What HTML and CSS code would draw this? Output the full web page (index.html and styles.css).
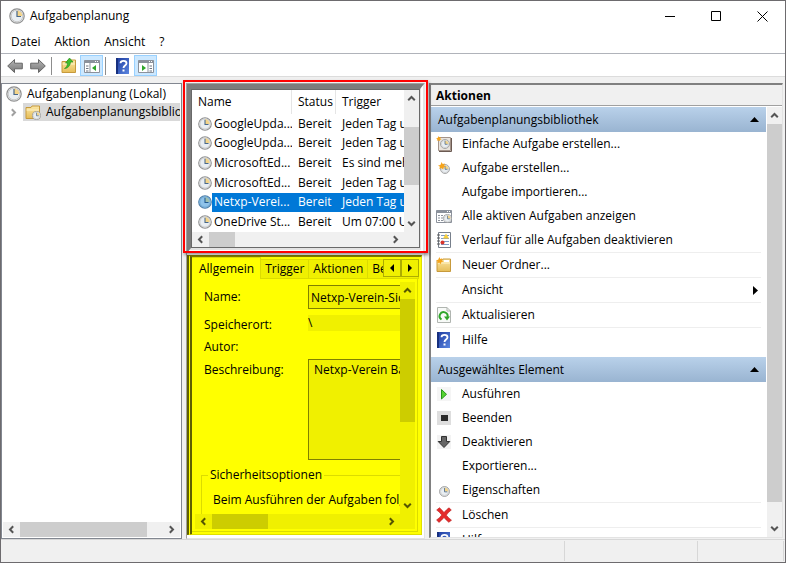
FILE: index.html
```html
<!DOCTYPE html>
<html lang="de">
<head>
<meta charset="UTF-8">
<meta name="viewport" content="width=device-width, initial-scale=1.0">
<title>Aufgabenplanung</title>
<link rel="stylesheet" href="styles.css">
</head>
<body>

<!-- Shared icons -->
<svg class="sprite" aria-hidden="true">
    <defs>
        <linearGradient id="g_help" x1="0" y1="0" x2="1" y2="1"><stop offset="0" stop-color="#1c3a9e"/><stop offset="1" stop-color="#5b86e0"/></linearGradient>
        <linearGradient id="g_folder" x1="0" y1="0" x2="0" y2="1"><stop offset="0" stop-color="#fbe7a6"/><stop offset="1" stop-color="#e6bd57"/></linearGradient>
        <linearGradient id="g_arrow" x1="0" y1="0" x2="0" y2="1"><stop offset="0" stop-color="#b5b5b5"/><stop offset="1" stop-color="#777777"/></linearGradient>
    </defs>
    <symbol id="clock" viewBox="0 0 16 16">
        <circle cx="8" cy="8" r="7.2" fill="#e9eef2" stroke="#8f8f8f" stroke-width="1.2"/>
        <circle cx="8" cy="8" r="5.8" fill="none" stroke="#c9c9c9" stroke-width="1"/>
        <path d="M8 8V2.6A5.4 5.4 0 0 1 13.4 8z" fill="#f3d489"/>
        <path d="M8 3v5.500h4" fill="none" stroke="#48688a" stroke-width="1.2"/>
    </symbol>
    <symbol id="clock_selected" viewBox="0 0 16 16">
        <circle cx="8" cy="8" r="7.2" fill="#8fc3ea" stroke="#4f7fa8" stroke-width="1.2"/>
        <circle cx="8" cy="8" r="5.8" fill="none" stroke="#70a9d4" stroke-width="1"/>
        <path d="M8 8V2.6A5.4 5.4 0 0 1 13.4 8z" fill="#9fbfae"/>
        <path d="M8 3v5.500h4" fill="none" stroke="#215a92" stroke-width="1.2"/>
    </symbol>
    <symbol id="help" viewBox="0 0 16 16">
        <path d="M1 0h13v16H1z" fill="url(#g_help)"/>
        <path d="M1 0h2v16H1z" fill="#17307f"/>
        <path d="M5.500 5.200C5.500 2 11.500 2 11.500 5.200C11.500 7.500 8.500 7.500 8.500 10" fill="none" stroke="#fff" stroke-width="1.8"/>
        <path d="M7.500 11.500h2v2h-2z" fill="#fff"/>
    </symbol>
    <symbol id="star" viewBox="0 0 16 16">
        <path d="M4.500 0l1.200 2.600L8.500 1.800 7.600 4.500 10 6 7.200 6.600 6.400 9.500 4.300 7.400 1.500 8.600 2.400 5.800 0 4.300 2.900 3.600z" fill="#f5a41c"/>
    </symbol>
    <symbol id="folder" viewBox="0 0 16 16">
        <path d="M1 3.500h5l1-1.500h7.500v12.500H1z" fill="url(#g_folder)" stroke="#c79a3c"/>
        <path d="M1.500 6h12.500" stroke="#fff3c8"/>
    </symbol>
    <symbol id="win" viewBox="0 0 16 16">
        <path d="M.5 2.500h15v12H.5z" fill="#fff" stroke="#8b919b"/>
        <path d="M.5 2.500h15v2.500H.5z" fill="#8b919b"/>
        <path d="M11 3.500h1M13 3.500h1" stroke="#fff"/>
    </symbol>
    <symbol id="up" viewBox="0 0 9 9"><path d="M1.200 6.200L4.500 3l3.300 3.200" fill="none" stroke="currentColor" stroke-width="2"/></symbol>
    <symbol id="down" viewBox="0 0 9 9"><path d="M1.200 2.800L4.500 6l3.300-3.200" fill="none" stroke="currentColor" stroke-width="2"/></symbol>
    <symbol id="left" viewBox="0 0 9 9"><path d="M6.200 1.200L3 4.500l3.200 3.300" fill="none" stroke="currentColor" stroke-width="2"/></symbol>
    <symbol id="right" viewBox="0 0 9 9"><path d="M2.800 1.200L6 4.500 2.800 7.800" fill="none" stroke="currentColor" stroke-width="2"/></symbol>
</svg>

<div class="window">
    <header class="titlebar">
        <svg class="icon"><use href="#clock"/></svg>
        <span class="title">Aufgabenplanung</span>
        <button class="win_button" aria-label="Minimieren"><svg class="win_icon" viewBox="0 0 11 11"><path d="M0 5.500h10"/></svg></button>
        <button class="win_button" aria-label="Maximieren"><svg class="win_icon" viewBox="0 0 11 11"><path d="M.5.5h9v9h-9z"/></svg></button>
        <button class="win_button" aria-label="Schließen"><svg class="win_icon" viewBox="0 0 11 11"><path d="M.5.5l10 10M10.500.5l-10 10"/></svg></button>
    </header>

    <nav class="menubar">
        <button>Datei</button>
        <button>Aktion</button>
        <button>Ansicht</button>
        <button>?</button>
    </nav>

    <div class="toolbar">
        <button class="tool" aria-label="Zurück"><svg class="icon" viewBox="0 0 16 16"><path d="M.7 8l6.800-6.500v3.700h7.800v5.600H7.500v3.700z" fill="url(#g_arrow)" stroke="#666"/></svg></button>
        <button class="tool" aria-label="Vorwärts"><svg class="icon" viewBox="0 0 16 16"><path d="M15.300 8L8.500 1.500v3.700H.7v5.600h7.800v3.700z" fill="url(#g_arrow)" stroke="#666"/></svg></button>
        <span class="tool_sep"></span>
        <button class="tool" aria-label="Nach oben"><svg class="icon" viewBox="0 0 16 16"><use href="#folder"/><path d="M3.500 10.500C5.500 9.500 6.500 7.500 6.500 5H4.500L8.500 0l3.500 4H9.500C9.300 7.500 7 10.500 3.500 10.500z" fill="#3fbf2c" stroke="#1f8a18" stroke-width=".6"/></svg></button>
        <button class="tool active" aria-label="Konsolenstruktur"><svg class="icon" viewBox="0 0 16 16"><use href="#win"/><path d="M6 5v9.500" stroke="#8b919b"/><path d="M2 8h2.500M2 10.500h2.500M2 13h2.500" stroke="#6d7582"/><path d="M12 7v6l-4-3z" fill="#2fa52a"/></svg></button>
        <span class="tool_sep"></span>
        <button class="tool" aria-label="Hilfe"><svg class="icon"><use href="#help"/></svg></button>
        <button class="tool active" aria-label="Aktionsbereich"><svg class="icon" viewBox="0 0 16 16"><use href="#win"/><path d="M10 5v9.500" stroke="#8b919b"/><path d="M11.500 8H14M11.500 10.500H14M11.500 13H14" stroke="#6d7582"/><path d="M4 7v6l4-3z" fill="#2fa52a"/></svg></button>
    </div>

    <main class="panes">
        <section class="tree">
            <ul class="tree_list">
                <li class="tree_row root"><svg class="icon"><use href="#clock"/></svg>Aufgabenplanung (Lokal)</li>
                <li class="tree_row">
                    <svg class="chevron"><use href="#right"/></svg>
                    <span class="tree_item"><svg class="icon" viewBox="0 0 16 16"><use href="#folder"/><use href="#clock" x="7" y="7" width="9" height="9"/></svg>Aufgabenplanungsbibliothek</span>
                </li>
            </ul>
            <div class="hscroll">
                <button aria-label="Nach links"><svg><use href="#left"/></svg></button>
                <span class="thumb thumb_tree"></span>
                <button aria-label="Nach rechts"><svg><use href="#right"/></svg></button>
            </div>
        </section>

        <div class="middle">
            <section class="tasks">
                <div class="tasks_view">
                    <table class="task_table">
                        <thead>
                            <tr><th class="col_name">Name</th><th class="col_status">Status</th><th>Trigger</th></tr>
                        </thead>
                        <tbody>
                            <tr><td><svg class="task_icon"><use href="#clock"/></svg>GoogleUpda...</td><td>Bereit</td><td>Jeden Tag u</td></tr>
                            <tr><td><svg class="task_icon"><use href="#clock"/></svg>GoogleUpda...</td><td>Bereit</td><td>Jeden Tag u</td></tr>
                            <tr><td><svg class="task_icon"><use href="#clock"/></svg>MicrosoftEd...</td><td>Bereit</td><td>Es sind meh</td></tr>
                            <tr><td><svg class="task_icon"><use href="#clock"/></svg>MicrosoftEd...</td><td>Bereit</td><td>Jeden Tag u</td></tr>
                            <tr class="selected"><td><svg class="task_icon"><use href="#clock_selected"/></svg>Netxp-Verei...</td><td>Bereit</td><td>Jeden Tag u</td></tr>
                            <tr><td><svg class="task_icon"><use href="#clock"/></svg>OneDrive St...</td><td>Bereit</td><td>Um 07:00 U</td></tr>
                        </tbody>
                    </table>
                    <div class="vscroll">
                        <button aria-label="Nach oben"><svg><use href="#up"/></svg></button>
                        <span class="thumb thumb_tasks"></span>
                        <button aria-label="Nach unten"><svg><use href="#down"/></svg></button>
                    </div>
                </div>
                <div class="hscroll corner">
                    <button aria-label="Nach links"><svg><use href="#left"/></svg></button>
                    <span class="thumb thumb_columns"></span>
                    <button aria-label="Nach rechts"><svg><use href="#right"/></svg></button>
                </div>
            </section>
            <div class="marker"></div>

            <section class="details">
                <div class="tabs">
                    <button class="tab current">Allgemein</button>
                    <button class="tab">Trigger</button>
                    <button class="tab">Aktionen</button>
                    <button class="tab last">Be</button>
                    <div class="tab_spin">
                        <button aria-label="Vorherige"><svg viewBox="0 0 4 8"><path d="M4 0v8L0 4z"/></svg></button>
                        <button aria-label="Nächste"><svg viewBox="0 0 4 8"><path d="M0 0v8l4-4z"/></svg></button>
                    </div>
                </div>
                <div class="tab_page">
                    <div class="form_view">
                        <div class="form">
                            <label for="task_name">Name:</label>
                            <input class="boxed" type="text" id="task_name" value="Netxp-Verein-Sic" readonly>
                            <label for="task_place">Speicherort:</label>
                            <input class="flat" type="text" id="task_place" value="\" readonly>
                            <span class="author">Autor:</span>
                            <label class="desc_label" for="task_desc">Beschreibung:</label>
                            <textarea class="boxed" id="task_desc" readonly>Netxp-Verein Ba</textarea>
                            <fieldset>
                                <legend>Sicherheitsoptionen</legend>
                                Beim Ausführen der Aufgaben folge
                            </fieldset>
                        </div>
                        <div class="vscroll">
                            <button aria-label="Nach oben"><svg><use href="#up"/></svg></button>
                            <span class="thumb thumb_form"></span>
                            <button aria-label="Nach unten"><svg><use href="#down"/></svg></button>
                        </div>
                    </div>
                    <div class="hscroll corner">
                        <button aria-label="Nach links"><svg><use href="#left"/></svg></button>
                        <span class="thumb thumb_form_x"></span>
                        <button aria-label="Nach rechts"><svg><use href="#right"/></svg></button>
                    </div>
                </div>
            </section>
        </div>

        <aside class="actions">
            <h2>Aktionen</h2>
            <div class="actions_view">
                <div class="action_list">
                    <h3>Aufgabenplanungsbibliothek<svg class="collapse" viewBox="0 0 9 5"><path d="M0 5h9L4.500 0z"/></svg></h3>
                    <ul>
                        <li><button><svg class="icon" viewBox="0 0 16 16"><path d="M2.500 1.500h12v13h-12z" fill="#e9e4de" stroke="#a39389"/><path d="M3 15.500h12.500V2" fill="none" stroke="#6b5a52"/><use href="#clock" x="4" y="3" width="10" height="10"/><use href="#star" width="9" height="9"/></svg>Einfache Aufgabe erstellen...</button></li>
                        <li><button><svg class="icon" viewBox="0 0 16 16"><use href="#clock" x="4" y="4" width="10" height="10"/><use href="#star" x="2" y="2" width="13" height="13"/></svg>Aufgabe erstellen...</button></li>
                        <li><button><span class="icon"></span>Aufgabe importieren...</button></li>
                        <li><button><svg class="icon" viewBox="0 0 16 16"><use href="#win"/><path d="M2 7.500h8M2 10h6M2 12.500h5" stroke="#8b919b" stroke-dasharray="2 1"/><use href="#clock" x="7" y="6" width="9" height="9"/></svg>Alle aktiven Aufgaben anzeigen</button></li>
                        <li><button><svg class="icon" viewBox="0 0 16 16"><path d="M2.500.5h12v15h-12z" fill="#fff" stroke="#777f8b"/><path d="M1 3h3M1 6h3M1 9h3M1 12h3" stroke="#555"/><path d="M5 3.500h8M5 6.500h8M5 9.500h8M5 12.500h8" stroke="#7f9ac4"/><path d="M10 1.500l3 5H7z" fill="#f7cf3c"/><circle cx="6.500" cy="10.500" r="2" fill="#d8342c"/></svg>Verlauf für alle Aufgaben deaktivieren</button></li>
                        <li class="line"><button><svg class="icon" viewBox="0 0 16 16"><use href="#folder"/><path d="M8 4h5" stroke="#fff" stroke-width="2"/><use href="#star" width="12" height="12"/></svg>Neuer Ordner...</button></li>
                        <li class="line"><button><span class="icon"></span>Ansicht<svg class="submenu" viewBox="0 0 5 9"><path d="M0 0v9l5-4.500z"/></svg></button></li>
                        <li class="line"><button><svg class="icon" viewBox="0 0 16 16"><path d="M1.500.5H11L14.500 4v11.500h-13z" fill="#f8faf8" stroke="#b0b5b0"/><path d="M11 .5V4h3.500" fill="none" stroke="#b0b5b0"/><path d="M5.500 12.500A4 4 0 1 1 11.500 10" fill="none" stroke="#2fa52a" stroke-width="2"/><path d="M8 9.500h6L11 13.500z" fill="#2fa52a"/></svg>Aktualisieren</button></li>
                        <li class="line"><button><svg class="icon"><use href="#help"/></svg>Hilfe</button></li>
                    </ul>
                    <h3 class="second">Ausgewähltes Element<svg class="collapse" viewBox="0 0 9 5"><path d="M0 5h9L4.500 0z"/></svg></h3>
                    <ul>
                        <li><button><svg class="icon" viewBox="0 0 16 16"><path d="M1 1h14v14H1z" fill="#f5f5f5"/><path d="M5.500 3.500v9.500l5-4.700z" fill="#55d331" stroke="#27961b"/></svg>Ausführen</button></li>
                        <li><button><svg class="icon" viewBox="0 0 16 16"><path d="M1 1h14v14H1z" fill="#dedede"/><path d="M5 5h7v6H5z" fill="#2b2b2b"/></svg>Beenden</button></li>
                        <li><button><svg class="icon" viewBox="0 0 16 16"><path d="M1 1h14v14H1z" fill="#f3f3f3"/><path d="M5.500 2.500h5v5h3.300L8 13.500 2.200 7.500h3.300z" fill="#666" stroke="#333"/></svg>Deaktivieren</button></li>
                        <li><button><span class="icon"></span>Exportieren...</button></li>
                        <li><button><svg class="icon" viewBox="0 0 16 16"><use href="#clock" x="3" y="4" width="11" height="11"/></svg>Eigenschaften</button></li>
                        <li class="line"><button><svg class="icon" viewBox="0 0 16 16"><path d="M.7 3L3.500.7Q6 3 8 5.500 10.500 2.500 13 .8L15.300 3Q12 5.500 10.300 8.200 12.500 11 15.500 13.200L12.800 15.300Q10 13 8 10.500 5.500 13.500 3 15.400L.6 13Q4 10.500 5.800 8 3.500 5 .7 3z" fill="#e52b2b" stroke="#b51d1d" stroke-width=".6"/></svg>Löschen</button></li>
                        <li class="line"><button><svg class="icon"><use href="#help"/></svg>Hilfe</button></li>
                    </ul>
                </div>
                <div class="vscroll">
                    <button aria-label="Nach oben"><svg><use href="#up"/></svg></button>
                    <span class="thumb thumb_actions"></span>
                    <button aria-label="Nach unten"><svg><use href="#down"/></svg></button>
                </div>
            </div>
        </aside>
    </main>

    <footer class="statusbar">
        <span class="status_main"></span>
        <span class="status_cell"></span>
        <span class="status_cell small"></span>
    </footer>
</div>

</body>
</html>
```
FILE: styles.css
```css
* {
    box-sizing: border-box;
}

body {
    margin: 0;
    font-family: "Segoe UI", "Open Sans", sans-serif;
    font-size: 12px;
    line-height: 18px;
    color: #000000;
}

button, input, textarea {
    font: inherit;
    color: inherit;
    margin: 0;
    padding: 0;
    border: none;
    background: none;
}

ul {
    list-style: none;
    margin: 0;
    padding: 0;
}

.sprite {
    position: absolute;
    width: 0;
    height: 0;
}

.icon {
    width: 16px;
    height: 16px;
    flex: none;
}

.window {
    display: flex;
    flex-direction: column;
    height: 100vh;
    border: 1px solid #6d6b6e;
    background-color: #ffffff;
    overflow: hidden;
}

/* Title bar, menu and toolbar */
.titlebar {
    display: flex;
    align-items: center;
    height: 30px;
    flex: none;
    padding-left: 8px;
}

.title {
    flex: 1;
    padding-left: 5px;
}

.win_button {
    display: flex;
    align-items: center;
    justify-content: center;
    width: 46px;
    height: 30px;
}

.win_icon {
    width: 11px;
    height: 11px;
    fill: none;
    stroke: #000000;
}

.menubar {
    display: flex;
    gap: 14px;
    height: 23px;
    flex: none;
    padding: 0 10px;
    border-bottom: 1px solid #b0b3ba;
}

.toolbar {
    display: flex;
    align-items: center;
    height: 23px;
    flex: none;
    padding: 1px 0 0 2px;
    border-bottom: 1px solid #dcdcdc;
}

.tool {
    display: flex;
    align-items: center;
    justify-content: center;
    width: 23px;
    height: 21px;
}

.tool.active {
    background-color: #cce8ff;
    border: 1px solid #99d1ff;
}

.tool_sep {
    width: 1px;
    height: 18px;
    margin: 0 5px 0 2px;
    background-color: #8d8d8d;
}

/* Scroll bars */
.hscroll, .vscroll {
    display: flex;
    flex: none;
    background-color: #f0f0f0;
    color: #555555;
}

.hscroll {
    height: 15px;
}

.hscroll.corner {
    padding-right: 15px;
}

.vscroll {
    flex-direction: column;
    width: 15px;
}

.hscroll button, .vscroll button {
    display: flex;
    align-items: center;
    justify-content: center;
    width: 17px;
    height: 15px;
    flex: none;
}

.vscroll button {
    width: 15px;
    height: 17px;
}

.hscroll button:last-child {
    margin-left: auto;
}

.vscroll button:last-child {
    margin-top: auto;
}

.hscroll svg, .vscroll svg, .chevron {
    width: 9px;
    height: 9px;
}

.thumb {
    background-color: #cdcdcd;
}

.thumb_tree {
    width: 72%;
}

.thumb_tasks {
    height: 58px;
    margin-top: 20px;
}

.thumb_columns {
    width: 26px;
}

.thumb_form {
    height: 53%;
}

.thumb_form_x {
    width: 56px;
}

.thumb_actions {
    height: 88%;
}

/* Panes */
.panes {
    display: grid;
    grid-template-columns: 181px 239px 1fr;
    column-gap: 4px;
    flex: 1;
    min-height: 0;
    padding: 6px 2px 0 0;
    background-color: #f0f0f0;
}

.tree {
    display: flex;
    flex-direction: column;
    justify-content: space-between;
    min-width: 0;
    padding: 1px;
    border: 1px solid #828790;
    background-color: #ffffff;
}

.tree_list {
    overflow: hidden;
}

.tree_row {
    display: flex;
    align-items: center;
    height: 18px;
    padding-left: 6px;
    white-space: nowrap;
}

.tree_row.root {
    gap: 5px;
    padding-left: 3px;
}

.chevron {
    flex: none;
    margin-right: 5px;
    color: #a0a0a0;
}

.tree_item {
    display: flex;
    align-items: center;
    gap: 5px;
    padding-left: 2px;
    background-color: #d9d9d9;
}

.middle {
    display: flex;
    flex-direction: column;
    position: relative;
    min-width: 0;
    min-height: 0;
    border: 1px solid #a0a0a0;
    border-right-color: #e3e3e3;
    border-bottom-color: #e3e3e3;
    background-color: #ffffff;
}

.tasks {
    flex: none;
    padding: 1px;
    border: 4px solid #7c7c7c;
    border-top-width: 5px;
    border-right: 4px double #e3e3e3;
    border-bottom: 5px double #e3e3e3;
    box-shadow: inset 0 0 0 1px #696969;
}

.tasks_view {
    display: flex;
    height: 142px;
    overflow: hidden;
}

.task_table {
    flex: 1;
    width: 0;
    height: 100%;
    table-layout: fixed;
    border-spacing: 0;
    white-space: nowrap;
}

.task_table th {
    height: 24px;
    padding: 0 6px;
    border-right: 1px solid #e5e5e5;
    font-weight: normal;
    text-align: left;
}

.task_table th:last-child {
    border-right: none;
}

.col_name {
    width: 100px;
}

.col_status {
    width: 44px;
}

.task_table td {
    height: 19px;
    padding: 0 0 0 6px;
    line-height: 16px;
    overflow: hidden;
}

.task_icon {
    width: 14px;
    height: 14px;
    margin-right: 2px;
    vertical-align: -3px;
}

.selected td {
    background-color: #0078d7;
    color: #ffffff;
}

.selected td:first-child {
    background: linear-gradient(to right, #ffffff 20px, #0078d7 20px);
}

.marker {
    position: absolute;
    top: -4px;
    left: -4px;
    right: -4px;
    height: 173px;
    border: 2px solid #ff0000;
    box-shadow: 1px 2px 3px rgba(0, 0, 0, 0.4);
    pointer-events: none;
}

/* Task details */
.details {
    display: flex;
    flex-direction: column;
    flex: 1;
    min-height: 0;
    margin: 2px 2px 3px 0;
    border: 1px solid #808000;
    border-left: 5px double #606000;
    border-top-width: 2px;
    border-right-color: #dfdf00;
    border-bottom-color: #dfdf00;
    background-color: #ffff00;
}

.tabs {
    display: flex;
    align-items: flex-end;
    position: relative;
    height: 22px;
    flex: none;
    margin-right: 2px;
    overflow: hidden;
}

.tab {
    height: 20px;
    padding: 0 4px;
    border: 1px solid #dcdc00;
    border-left: none;
    background-color: #f0f000;
}

.tab.current {
    height: 22px;
    padding: 0 6px 0 7px;
    border-bottom: none;
    background-color: #ffff00;
}

.tab.last {
    flex: 1;
    text-align: left;
}

.tab_spin {
    display: flex;
    position: absolute;
    top: 2px;
    right: 0;
}

.tab_spin button {
    display: flex;
    align-items: center;
    justify-content: center;
    width: 18px;
    height: 18px;
    border: 1px solid #adad00;
    background-color: #f0f000;
}

.tab_spin svg {
    width: 4px;
    height: 8px;
}

.tab_page {
    display: flex;
    flex-direction: column;
    flex: 1;
    min-height: 0;
    margin: 0 3px 2px 0;
    padding: 3px 2px 2px 3px;
    border: 1px solid #dcdc00;
    border-top: none;
    border-left: none;
}

.form_view {
    display: flex;
    flex: 1;
    min-height: 0;
}

.form {
    display: grid;
    grid-template-columns: 104px 200px;
    grid-template-rows: 24px 20px 12px 101px auto;
    row-gap: 6px;
    align-items: center;
    align-content: start;
    flex: 1;
    min-width: 0;
    padding: 3px 0 0 9px;
    white-space: nowrap;
    overflow: hidden;
}

.form input, .form textarea {
    width: 100%;
    height: 100%;
    background-color: #f0f000;
    resize: none;
}

.form input.flat {
    align-self: start;
    height: 16px;
}

.form .boxed {
    padding: 0 2px;
    border: 1px solid #808000;
}

.form textarea.boxed {
    padding: 1px 5px;
}

.author {
    grid-column: 1 / 3;
}

.desc_label {
    align-self: start;
    padding-top: 2px;
}

.form fieldset {
    grid-column: 1 / 3;
    height: 80px;
    margin: 0 0 0 -3px;
    padding: 7px 11px;
    border: 1px solid #dcdc00;
}

.form legend {
    margin-left: -5px;
    padding: 0 2px;
}

.details .hscroll, .details .vscroll {
    background-color: #f0f000;
    color: #555500;
}

.details .thumb {
    background-color: #cdcd00;
}

/* Actions */
.actions {
    display: flex;
    flex-direction: column;
    min-width: 0;
    min-height: 0;
    margin-bottom: 1px;
    border: 2px solid #808080;
    border-right: 1px solid #e3e3e3;
    border-bottom: 1px solid #e3e3e3;
    background-color: #ffffff;
}

.actions h2 {
    flex: none;
    height: 21px;
    margin: 0 0 1px;
    padding-left: 5px;
    border-bottom: 1px solid #a0a0a0;
    background-color: #f0f0f0;
    font-size: 12px;
    line-height: 22px;
}

.actions_view {
    display: flex;
    gap: 1px;
    flex: 1;
    min-height: 0;
}

.action_list {
    flex: 1;
    min-width: 0;
    overflow: hidden;
}

.action_list h3 {
    display: flex;
    align-items: center;
    justify-content: space-between;
    height: 25px;
    margin: 0;
    padding: 0 7px;
    background: linear-gradient(#b9d1ea, #99b4d1);
    font-size: 12px;
    font-weight: normal;
}

.action_list h3.second {
    margin-top: 5px;
}

.collapse {
    width: 9px;
    height: 5px;
}

.action_list li {
    margin: 0 5px;
}

.action_list li.line {
    border-top: 1px solid #eeeeee;
}

.action_list button {
    display: flex;
    align-items: center;
    gap: 10px;
    width: 100%;
    height: 24px;
    text-align: left;
}

.submenu {
    width: 5px;
    height: 9px;
    margin-left: auto;
    margin-right: 3px;
}

/* Status bar */
.statusbar {
    display: flex;
    height: 23px;
    flex: none;
    padding: 1px 1px 1px 0;
    border-top: 1px solid #d7d7d7;
    background-color: #f0f0f0;
}

.status_main {
    flex: 1;
}

.status_cell {
    width: 133px;
    border-left: 1px solid #d7d7d7;
}

.status_cell.small {
    width: 87px;
    border-right: 1px solid #d7d7d7;
}
```
